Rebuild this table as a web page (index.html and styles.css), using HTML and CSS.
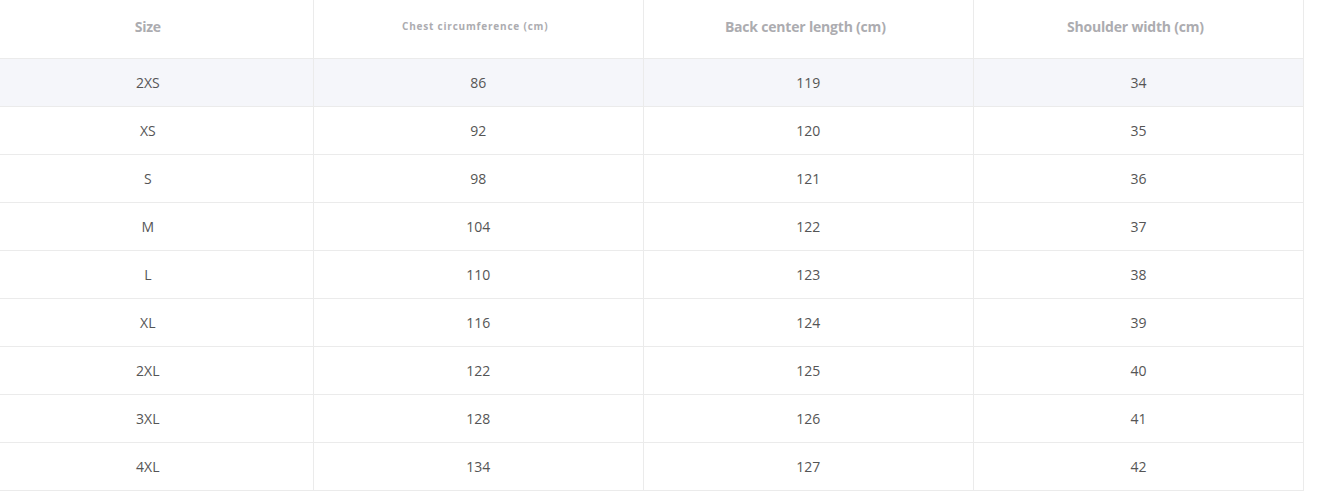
FILE: index.html
```html
<!DOCTYPE html>
<html>
<head>
<meta charset="utf-8">
<link rel="stylesheet" href="styles.css">
</head>
<body>
<table class="size-table">
  <colgroup>
    <col class="c"><col class="c"><col class="c"><col class="c">
  </colgroup>
  <thead>
    <tr>
      <th class="first">Size</th>
      <th class="small">Chest circumference (cm)</th>
      <th>Back center length (cm)</th>
      <th>Shoulder width (cm)</th>
    </tr>
  </thead>
  <tbody>
    <tr class="hl"><td>2XS</td><td>86</td><td>119</td><td>34</td></tr>
    <tr><td>XS</td><td>92</td><td>120</td><td>35</td></tr>
    <tr><td>S</td><td>98</td><td>121</td><td>36</td></tr>
    <tr><td>M</td><td>104</td><td>122</td><td>37</td></tr>
    <tr><td>L</td><td>110</td><td>123</td><td>38</td></tr>
    <tr><td>XL</td><td>116</td><td>124</td><td>39</td></tr>
    <tr><td>2XL</td><td>122</td><td>125</td><td>40</td></tr>
    <tr><td>3XL</td><td>128</td><td>126</td><td>41</td></tr>
    <tr><td>4XL</td><td>134</td><td>127</td><td>42</td></tr>
  </tbody>
</table>
</body>
</html>
```
FILE: styles.css
```css
html, body {
  margin: 0;
  padding: 0;
  background: #fff;
  overflow: hidden;
}
body {
  font-family: "Open Sans", "Noto Sans", "Liberation Sans", sans-serif;
}
.size-table {
  border-collapse: collapse;
  table-layout: fixed;
  width: 1321px;
  margin-left: -17px;
}
.c { width: 330px; }
.size-table th,
.size-table td {
  text-align: center;
  border-right: 1px solid #ebebeb;
  border-bottom: 1px solid #ebebeb;
  padding: 0;
}
.size-table th {
  height: 58px;
  padding: 0 6px 5px 0;
  box-sizing: border-box;
  font-size: 14px;
  font-weight: 700;
  color: #acacb0;
  letter-spacing: -0.2px;
}
.size-table th.first {
  padding-right: 0;
}
.size-table th.small {
  font-size: 10px;
  letter-spacing: 0.8px;
}
.size-table td {
  height: 47px;
  font-size: 14px;
  color: #555;
}
.size-table tr.hl td {
  background: #f5f6fa;
}
```
